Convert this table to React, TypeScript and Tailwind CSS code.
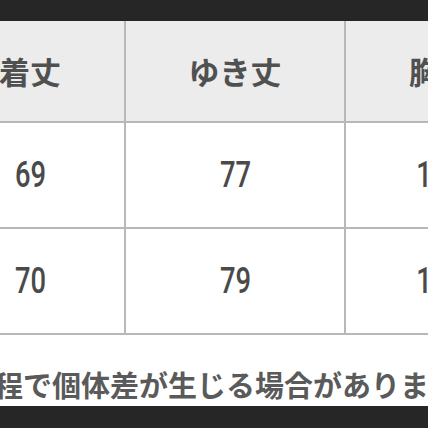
const headers = ["着丈", "ゆき丈", "胸囲"];
const rows = [
  ["69", "77", "118"],
  ["70", "79", "122"],
];

const jp = "font-['Noto_Sans_CJK_JP',sans-serif]";

export default function App() {
  return (
    <div className="w-[428px] h-[428px] overflow-hidden bg-white flex flex-col">
      <div className="h-[21px] bg-[#262626] shrink-0" />

      {/* size table, first column runs off the left edge */}
      <div className="ml-[-64px] grid grid-cols-[190px_220px_190px] shrink-0">
        {headers.map((h) => (
          <div
            key={h}
            className={`h-[102px] bg-[#ececec] border-r-2 border-b-2 border-[#b8b8b8] flex items-center justify-center ${jp} font-bold text-[31px] text-[#505050]`}
          >
            {h}
          </div>
        ))}
        {rows.map((r, i) =>
          r.map((v, j) => (
            <div
              key={`${i}-${j}`}
              className="h-[106px] border-r-2 border-b-2 border-[#b8b8b8] flex items-center justify-center"
            >
              <span className="inline-block scale-x-[0.76] font-['Roboto',sans-serif] font-medium text-[36px] text-[#4a4a4a] leading-none">
                {v}
              </span>
            </div>
          ))
        )}
      </div>

      <div className="flex-1 flex items-center whitespace-nowrap ml-[-35px] pt-[28px]">
        <span className={`${jp} font-bold text-[29px] text-[#5a5a5a] leading-none`}>
          工程で個体差が生じる場合があります。
        </span>
      </div>

      <div className="h-[22px] bg-[#262626] shrink-0" />
    </div>
  );
}
